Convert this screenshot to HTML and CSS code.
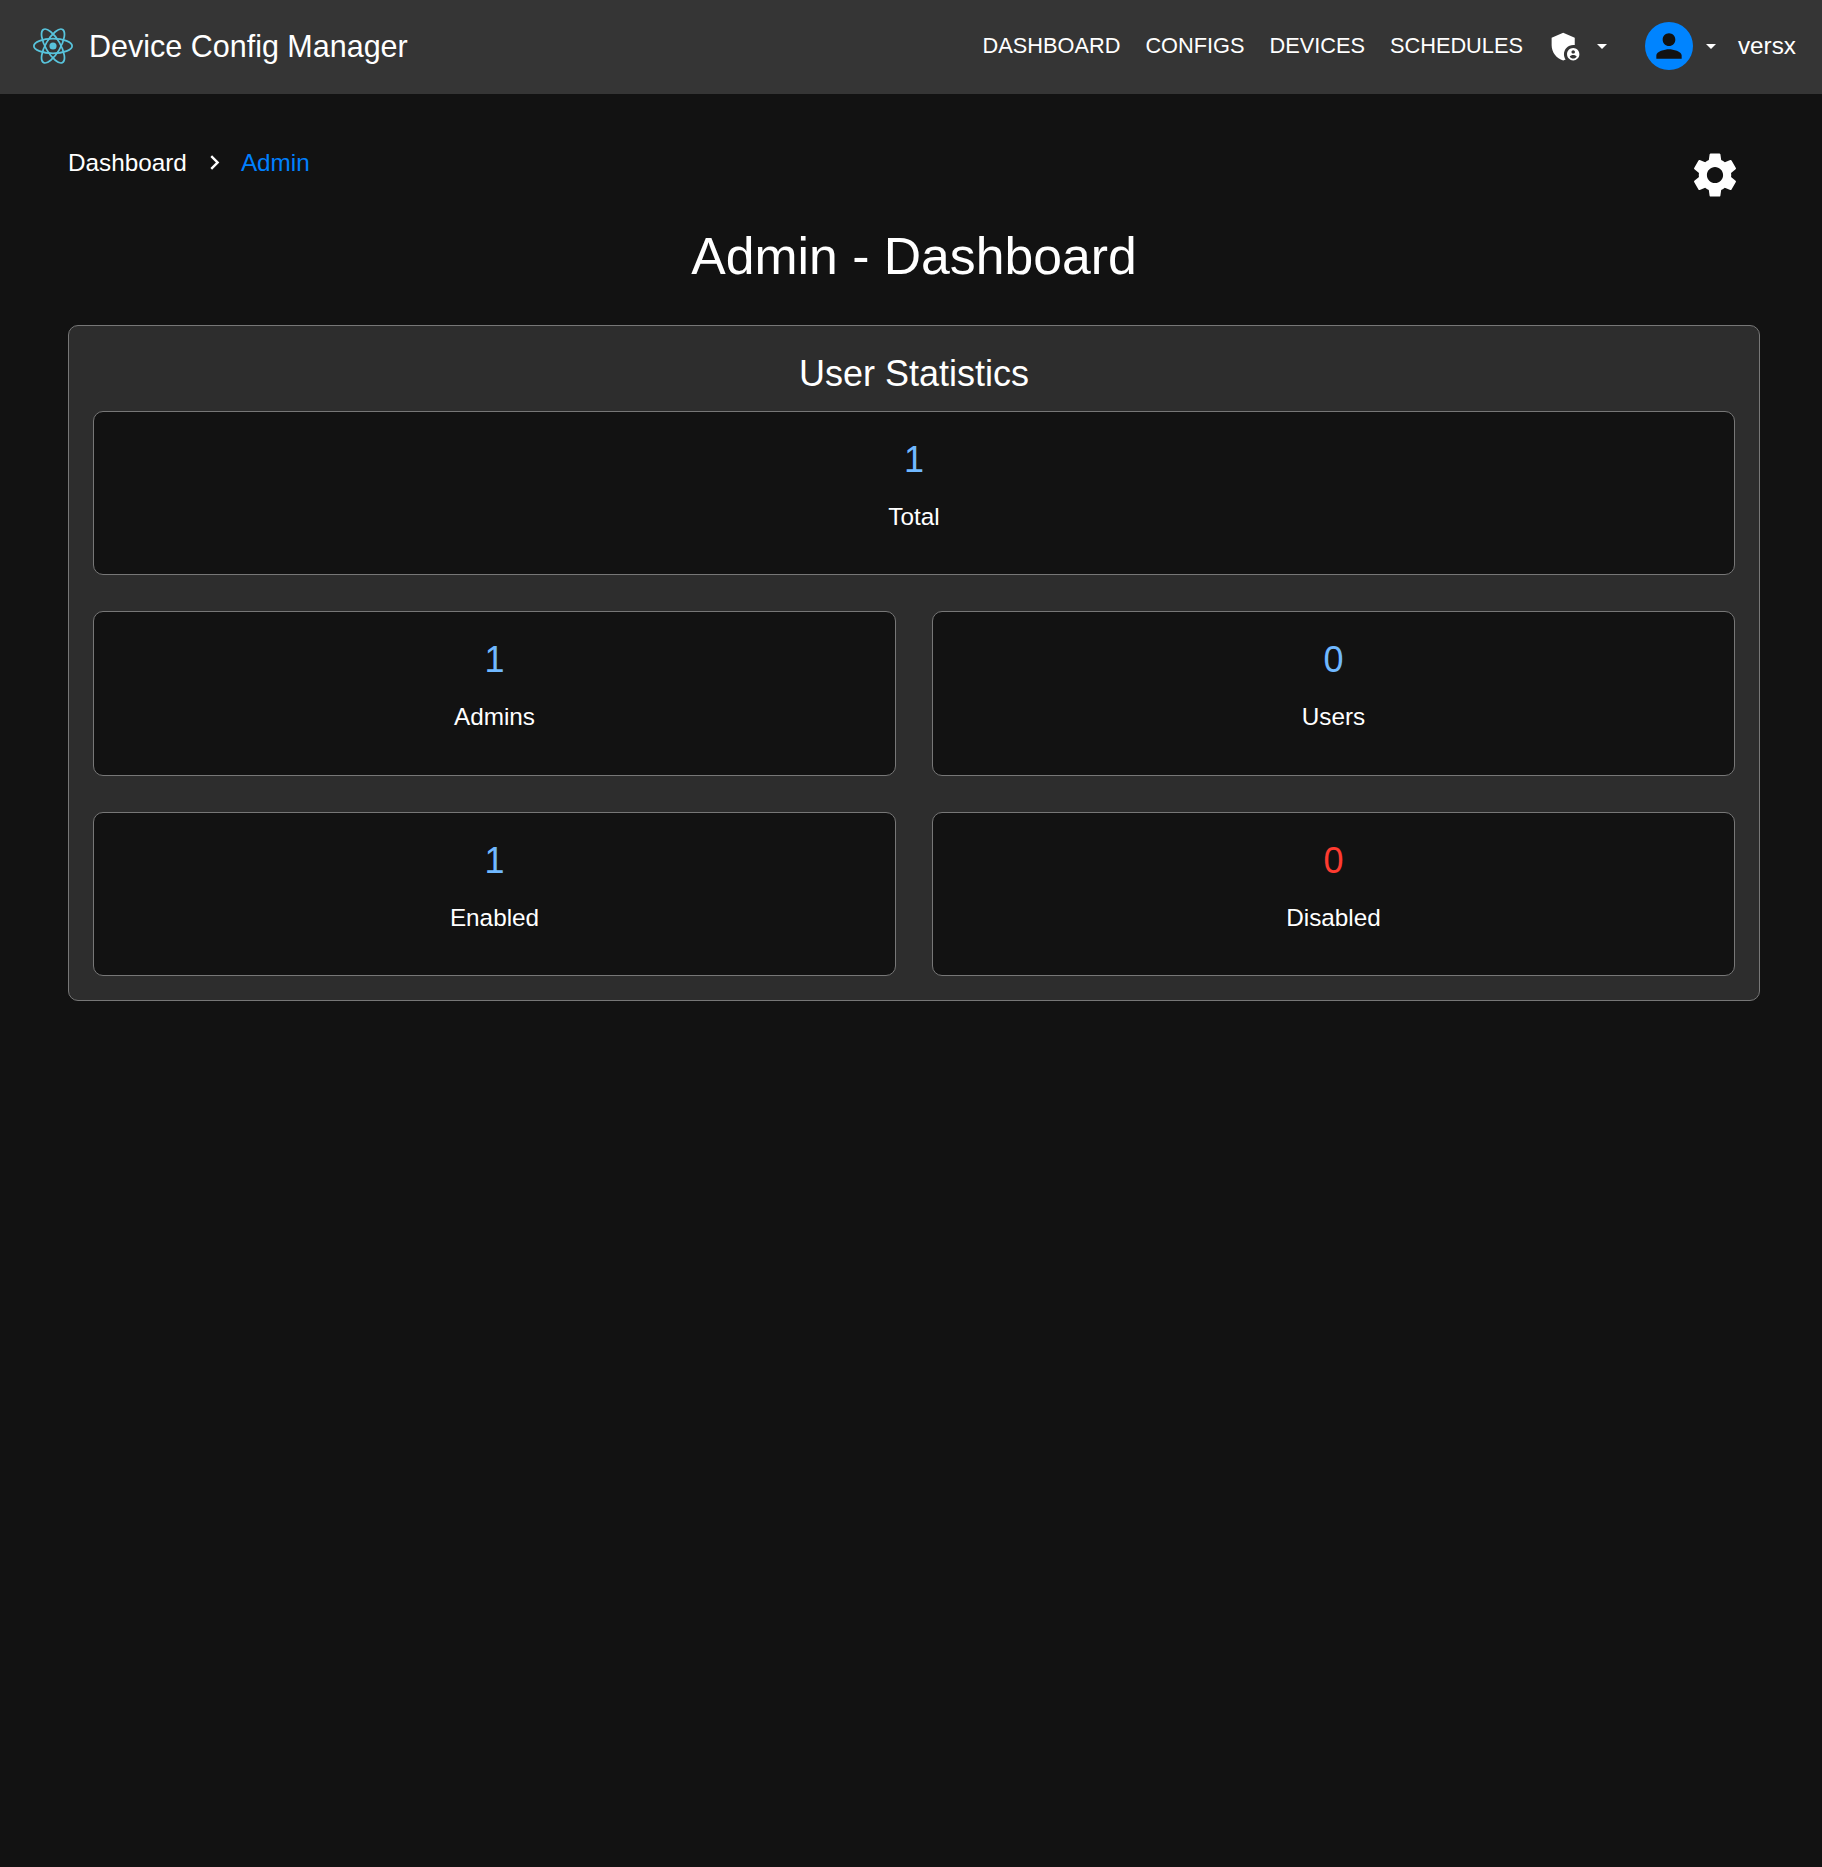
FILE: index.html
```html
<!DOCTYPE html>
<html lang="en">
<head>
  <meta charset="UTF-8">
  <title>Device Config Manager</title>
  <meta name="viewport" content="width=device-width, initial-scale=1" />
  <link rel="stylesheet" href="styles.css">
</head>
<body>
  <header class="navbar">
    <div class="brand">
      <svg class="brand-logo" viewBox="-11.5 -10.23 23 20.46" fill="none" stroke="#58c4dc" stroke-width="1">
        <circle r="2.05" fill="#58c4dc" stroke="none" />
        <ellipse rx="11" ry="4.2" />
        <ellipse rx="11" ry="4.2" transform="rotate(60)" />
        <ellipse rx="11" ry="4.2" transform="rotate(120)" />
      </svg>
      <span class="brand-name">Device Config Manager</span>
    </div>
    <nav class="nav-links">
      <a class="nav-link">Dashboard</a>
      <a class="nav-link">Configs</a>
      <a class="nav-link">Devices</a>
      <a class="nav-link">Schedules</a>
    </nav>
    <div class="nav-admin">
      <svg class="admin-icon" viewBox="0 0 24 24" fill="#fff">
        <path d="M17 11c.34 0 .67.04 1 .09V6.27L10.5 3 3 6.27v4.91c0 4.54 3.2 8.79 7.5 9.82.55-.13 1.08-.32 1.6-.55-.69-.98-1.1-2.17-1.1-3.45 0-3.31 2.69-6 6-6z" />
        <path d="M17 13c-2.21 0-4 1.79-4 4s1.79 4 4 4 4-1.79 4-4-1.79-4-4-4zm0 1.38c.62 0 1.12.51 1.12 1.12s-.51 1.12-1.12 1.12-1.12-.51-1.12-1.12.5-1.12 1.12-1.12zm0 5.37c-.93 0-1.74-.46-2.24-1.17.05-.72 1.51-1.08 2.24-1.08s2.19.36 2.24 1.08c-.5.71-1.31 1.17-2.24 1.17z" />
      </svg>
      <svg class="caret" viewBox="0 0 24 24" fill="#fff"><path d="M7 10l5 5 5-5z" /></svg>
    </div>
    <div class="nav-user">
      <span class="avatar">
        <svg viewBox="0 0 24 24" fill="#121212"><path d="M12 12c2.21 0 4-1.79 4-4s-1.79-4-4-4-4 1.79-4 4 1.79 4 4 4zm0 2c-2.67 0-8 1.34-8 4v2h16v-2c0-2.66-5.33-4-8-4z" /></svg>
      </span>
      <svg class="caret" viewBox="0 0 24 24" fill="#fff"><path d="M7 10l5 5 5-5z" /></svg>
      <span class="username">versx</span>
    </div>
  </header>

  <main class="content">
    <div class="page-top">
      <div class="breadcrumbs">
        <span>Dashboard</span>
        <svg class="crumb-sep" viewBox="0 0 24 24" fill="#fff"><path d="M10 6L8.59 7.41 13.17 12l-4.58 4.59L10 18l6-6z" /></svg>
        <span class="crumb-current">Admin</span>
      </div>
      <svg class="settings-icon" viewBox="0 0 24 24" fill="#fff">
        <path d="M19.14 12.94c.04-.3.06-.61.06-.94 0-.32-.02-.64-.07-.94l2.03-1.58c.18-.14.23-.41.12-.61l-1.92-3.32c-.12-.22-.37-.29-.59-.22l-2.39.96c-.5-.38-1.03-.7-1.62-.94l-.36-2.54c-.04-.24-.24-.41-.48-.41h-3.84c-.24 0-.43.17-.47.41l-.36 2.54c-.59.24-1.13.57-1.62.94l-2.39-.96c-.22-.08-.47 0-.59.22L2.74 8.87c-.12.21-.08.47.12.61l2.03 1.58c-.05.3-.09.63-.09.94s.02.64.07.94l-2.03 1.58c-.18.14-.23.41-.12.61l1.92 3.32c.12.22.37.29.59.22l2.39-.96c.5.38 1.03.7 1.62.94l.36 2.54c.05.24.24.41.48.41h3.84c.24 0 .44-.17.47-.41l.36-2.54c.59-.24 1.13-.56 1.62-.94l2.39.96c.22.08.47 0 .59-.22l1.92-3.32c.12-.22.07-.47-.12-.61l-2.01-1.58zM12 15.6c-1.98 0-3.6-1.62-3.6-3.6s1.62-3.6 3.6-3.6 3.6 1.62 3.6 3.6-1.62 3.6-3.6 3.6z" />
      </svg>
    </div>

    <h1 class="page-title">Admin - Dashboard</h1>

    <section class="panel">
      <h2 class="panel-title">User Statistics</h2>
      <div class="stat-grid">
        <div class="stat-card stat-wide">
          <div class="stat-value">1</div>
          <div class="stat-label">Total</div>
        </div>
        <div class="stat-card">
          <div class="stat-value">1</div>
          <div class="stat-label">Admins</div>
        </div>
        <div class="stat-card">
          <div class="stat-value">0</div>
          <div class="stat-label">Users</div>
        </div>
        <div class="stat-card">
          <div class="stat-value">1</div>
          <div class="stat-label">Enabled</div>
        </div>
        <div class="stat-card">
          <div class="stat-value stat-danger">0</div>
          <div class="stat-label">Disabled</div>
        </div>
      </div>
    </section>
  </main>
</body>
</html>
```

FILE: styles.css
```css
* { box-sizing: border-box; }
body { margin: 0; min-height: 1867px; background: #121212; color: #fff; font-family: "Liberation Sans", Arial, sans-serif; }

.navbar { display: flex; align-items: center; height: 94px; padding: 0 26px 2px 33px; background: #353535; }
.brand { display: flex; align-items: center; margin-right: auto; }
.brand-logo { width: 40px; height: 36px; margin-right: 16px; }
.brand-name { font-size: 30.5px; }
.nav-links { display: flex; gap: 25px; margin-right: 24.5px; }
.nav-link { font-size: 21.75px; text-transform: uppercase; }
.nav-admin { display: flex; align-items: center; margin-right: 31px; }
.admin-icon { width: 37px; height: 37px; }
.caret { width: 24px; height: 24px; }
.nav-admin .caret { margin-left: 5.5px; }
.nav-user { display: flex; align-items: center; }
.avatar { display: flex; align-items: center; justify-content: center; width: 48px; height: 48px; border-radius: 50%; background: #0084ff; }
.avatar svg { width: 38px; height: 38px; }
.nav-user .caret { margin-left: 6px; margin-right: 15px; }
.username { font-size: 24.3px; }

.content { padding: 0 62px 0 68px; }
.page-top { display: flex; justify-content: space-between; align-items: flex-start; padding: 54px 18px 0 0; }
.breadcrumbs { display: flex; align-items: center; font-size: 24.3px; }
.crumb-sep { width: 29px; height: 29px; margin: 0 12px 0 13px; }
.crumb-current { color: #0080ff; }
.settings-icon { width: 54px; height: 54px; }
.page-title { margin: 24px 0 0; text-align: center; font-size: 51.7px; font-weight: 400; line-height: 60px; }

.panel { margin-top: 39px; padding: 24px; background: #2d2d2d; border: 1px solid #777; border-radius: 10px; }
.panel-title { margin: 0 0 13px; text-align: center; font-size: 36px; font-weight: 400; line-height: 48px; }
.stat-grid { display: grid; grid-template-columns: 1fr 1fr; gap: 36px; }
.stat-card { height: 164.4px; padding-top: 27px; text-align: center; background: #121212; border: 1px solid #777; border-radius: 10px; }
.stat-wide { grid-column: 1 / 3; }
.stat-value { font-size: 36px; line-height: 42px; color: #70b8ff; }
.stat-danger { color: #ff3b30; }
.stat-label { margin-top: 22px; font-size: 24.3px; line-height: 28px; }
```
